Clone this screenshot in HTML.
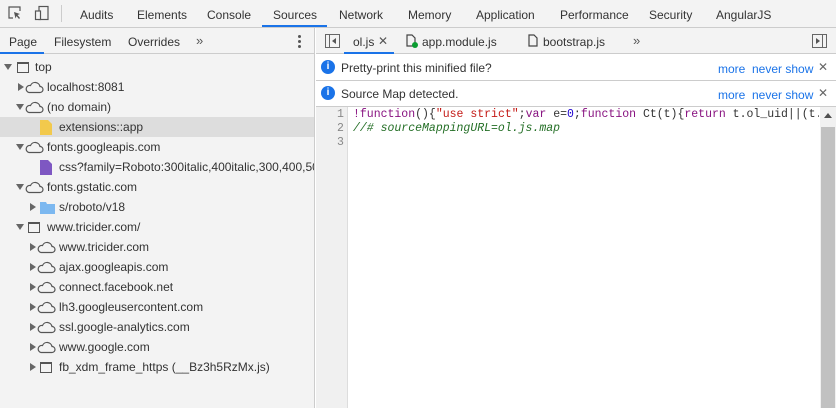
<!DOCTYPE html>
<html><head><style>
*{margin:0;padding:0;box-sizing:border-box}
body{width:836px;height:408px;overflow:hidden;font-family:"Liberation Sans",sans-serif;font-size:12px;color:#333;background:#fff;position:relative}
.abs{position:absolute;white-space:nowrap}
#top{position:absolute;left:0;top:0;width:836px;height:28px;background:#f3f3f3;border-bottom:1px solid #ccc}
#top span{position:absolute;top:8px;color:#333}
#left{position:absolute;left:0;top:28px;width:315px;height:380px;background:#f3f3f3;border-right:1px solid #ccc}
#tree{overflow:hidden;width:314px;height:351px}
.row{position:absolute;left:0;width:314px;height:20px;line-height:20px;white-space:nowrap;overflow:hidden}
.row .t{position:absolute;top:0;white-space:nowrap}
.arrow{position:absolute;top:7px;width:0;height:0}
.ad{border-left:4px solid transparent;border-right:4px solid transparent;border-top:6px solid #666}
.ar{border-top:4px solid transparent;border-bottom:4px solid transparent;border-left:6px solid #666;top:6px}
.cloud{position:absolute;top:3px}
.code{font-family:"Liberation Mono",monospace;font-size:11.5px}
</style></head><body>
<div id="top">
<svg class="abs" style="left:8px;top:6px" width="14" height="14" viewBox="0 0 14 14"><path d="M5 12H1V1h11v4" fill="none" stroke="#555" stroke-width="1.2"/><path d="M6 6l6 2-2.5 1 2.5 3-1 1-2.5-3-1 2.5z" fill="#555"/></svg>
<svg class="abs" style="left:34px;top:5px" width="16" height="16" viewBox="0 0 16 16"><rect x="5" y="1.5" width="9" height="13" fill="none" stroke="#555" stroke-width="1.2"/><rect x="1.5" y="6" width="5" height="8.5" fill="#f3f3f3" stroke="#555" stroke-width="1.2"/></svg>
<div class="abs" style="left:61px;top:5px;width:1px;height:17px;background:#ccc"></div>
<span style="left:80px">Audits</span><span style="left:137px">Elements</span><span style="left:207px">Console</span><span style="left:273px">Sources</span><span style="left:339px">Network</span><span style="left:408px">Memory</span><span style="left:476px">Application</span><span style="left:560px">Performance</span><span style="left:649px">Security</span><span style="left:716px">AngularJS</span>
<div class="abs" style="left:262px;top:25px;width:65px;height:2px;background:#1a73e8"></div>
</div>
<div id="left">
<div class="abs" style="left:0;top:0;width:315px;height:26px;border-bottom:1px solid #ccc"></div>
<span class="abs" style="left:9px;top:7px">Page</span><span class="abs" style="left:54px;top:7px">Filesystem</span><span class="abs" style="left:128px;top:7px">Overrides</span><span class="abs" style="left:196px;top:5px;font-size:13px;color:#555">»</span>
<div class="abs" style="left:0;top:24px;width:44px;height:2px;background:#1a73e8"></div>
<div class="abs" style="left:298px;top:7px;width:3px;height:3px;background:#555;border-radius:2px;box-shadow:0 5px #555,0 10px #555"></div>
</div>
<div id="tree" style="position:absolute;left:0;top:57px">
<div class="row" style="top:0"><div class="arrow ad" style="left:4px"></div><div class="abs" style="left:17px;top:5px;width:12px;height:11px;border:1.3px solid #555;border-top-width:2.5px"></div><span class="t" style="left:35px">top</span></div>
<div class="row" style="top:20px"><div class="arrow ar" style="left:18px"></div><svg class="cloud" style="left:25px" width="19" height="14" viewBox="0 0 19 14"><path d="M4 12.5h11a3 3 0 0 0 0-6 5 5 0 0 0-9.5-1A3.5 3.5 0 0 0 4 12.5z" fill="none" stroke="#555" stroke-width="1.2"/></svg><span class="t" style="left:47px">localhost:8081</span></div>
<div class="row" style="top:40px"><div class="arrow ad" style="left:16px"></div><svg class="cloud" style="left:25px" width="19" height="14" viewBox="0 0 19 14"><path d="M4 12.5h11a3 3 0 0 0 0-6 5 5 0 0 0-9.5-1A3.5 3.5 0 0 0 4 12.5z" fill="none" stroke="#555" stroke-width="1.2"/></svg><span class="t" style="left:47px">(no domain)</span></div>
<div class="row" style="top:60px;background:#ddd"><svg class="abs" style="left:40px;top:3px" width="12" height="15"><path d="M0 0h8l4 4v11H0z" fill="#f2c94c"/></svg><span class="t" style="left:59px">extensions::app</span></div>
<div class="row" style="top:80px"><div class="arrow ad" style="left:16px"></div><svg class="cloud" style="left:25px" width="19" height="14" viewBox="0 0 19 14"><path d="M4 12.5h11a3 3 0 0 0 0-6 5 5 0 0 0-9.5-1A3.5 3.5 0 0 0 4 12.5z" fill="none" stroke="#555" stroke-width="1.2"/></svg><span class="t" style="left:47px">fonts.googleapis.com</span></div>
<div class="row" style="top:100px"><svg class="abs" style="left:40px;top:3px" width="12" height="15"><path d="M0 0h8l4 4v11H0z" fill="#7e57c2"/></svg><span class="t" style="left:59px">css?family=Roboto:300italic,400italic,300,400,500</span></div>
<div class="row" style="top:120px"><div class="arrow ad" style="left:16px"></div><svg class="cloud" style="left:25px" width="19" height="14" viewBox="0 0 19 14"><path d="M4 12.5h11a3 3 0 0 0 0-6 5 5 0 0 0-9.5-1A3.5 3.5 0 0 0 4 12.5z" fill="none" stroke="#555" stroke-width="1.2"/></svg><span class="t" style="left:47px">fonts.gstatic.com</span></div>
<div class="row" style="top:140px"><div class="arrow ar" style="left:30px"></div><svg class="abs" style="left:40px;top:4px" width="15" height="13"><path d="M0 1h6l1 2h8v10H0z" fill="#7cb8f0"/></svg><span class="t" style="left:59px">s/roboto/v18</span></div>
<div class="row" style="top:160px"><div class="arrow ad" style="left:16px"></div><div class="abs" style="left:28px;top:5px;width:12px;height:11px;border:1.3px solid #555;border-top-width:2.5px"></div><span class="t" style="left:47px">www.tricider.com/</span></div>
<div class="row" style="top:180px"><div class="arrow ar" style="left:30px"></div><svg class="cloud" style="left:37px" width="19" height="14" viewBox="0 0 19 14"><path d="M4 12.5h11a3 3 0 0 0 0-6 5 5 0 0 0-9.5-1A3.5 3.5 0 0 0 4 12.5z" fill="none" stroke="#555" stroke-width="1.2"/></svg><span class="t" style="left:59px">www.tricider.com</span></div>
<div class="row" style="top:200px"><div class="arrow ar" style="left:30px"></div><svg class="cloud" style="left:37px" width="19" height="14" viewBox="0 0 19 14"><path d="M4 12.5h11a3 3 0 0 0 0-6 5 5 0 0 0-9.5-1A3.5 3.5 0 0 0 4 12.5z" fill="none" stroke="#555" stroke-width="1.2"/></svg><span class="t" style="left:59px">ajax.googleapis.com</span></div>
<div class="row" style="top:220px"><div class="arrow ar" style="left:30px"></div><svg class="cloud" style="left:37px" width="19" height="14" viewBox="0 0 19 14"><path d="M4 12.5h11a3 3 0 0 0 0-6 5 5 0 0 0-9.5-1A3.5 3.5 0 0 0 4 12.5z" fill="none" stroke="#555" stroke-width="1.2"/></svg><span class="t" style="left:59px">connect.facebook.net</span></div>
<div class="row" style="top:240px"><div class="arrow ar" style="left:30px"></div><svg class="cloud" style="left:37px" width="19" height="14" viewBox="0 0 19 14"><path d="M4 12.5h11a3 3 0 0 0 0-6 5 5 0 0 0-9.5-1A3.5 3.5 0 0 0 4 12.5z" fill="none" stroke="#555" stroke-width="1.2"/></svg><span class="t" style="left:59px">lh3.googleusercontent.com</span></div>
<div class="row" style="top:260px"><div class="arrow ar" style="left:30px"></div><svg class="cloud" style="left:37px" width="19" height="14" viewBox="0 0 19 14"><path d="M4 12.5h11a3 3 0 0 0 0-6 5 5 0 0 0-9.5-1A3.5 3.5 0 0 0 4 12.5z" fill="none" stroke="#555" stroke-width="1.2"/></svg><span class="t" style="left:59px">ssl.google-analytics.com</span></div>
<div class="row" style="top:280px"><div class="arrow ar" style="left:30px"></div><svg class="cloud" style="left:37px" width="19" height="14" viewBox="0 0 19 14"><path d="M4 12.5h11a3 3 0 0 0 0-6 5 5 0 0 0-9.5-1A3.5 3.5 0 0 0 4 12.5z" fill="none" stroke="#555" stroke-width="1.2"/></svg><span class="t" style="left:59px">www.google.com</span></div>
<div class="row" style="top:300px"><div class="arrow ar" style="left:30px"></div><div class="abs" style="left:40px;top:5px;width:12px;height:11px;border:1.3px solid #555;border-top-width:2.5px"></div><span class="t" style="left:59px">fb_xdm_frame_https (__Bz3h5RzMx.js)</span></div>
</div>
<!-- right -->
<div class="abs" style="left:316px;top:28px;width:520px;height:26px;background:#f3f3f3;border-bottom:1px solid #ccc"></div>
<svg class="abs" style="left:325px;top:34px" width="15" height="14"><rect x="0.5" y="0.5" width="14" height="13" fill="none" stroke="#666"/><line x1="4.5" y1="1" x2="4.5" y2="13" stroke="#666"/><path d="M11 4v6l-4-3z" fill="#555"/></svg>
<span class="abs" style="left:353px;top:35px">ol.js</span><span class="abs" style="left:378px;top:34px;color:#555">✕</span>
<div class="abs" style="left:344px;top:52px;width:50px;height:2px;background:#1a73e8"></div>
<svg class="abs" style="left:406px;top:34px" width="12" height="14"><path d="M1 1h5l3 3v8H1z" fill="none" stroke="#444" stroke-width="1.2"/><circle cx="9" cy="11" r="3" fill="#0a9d31"/></svg>
<span class="abs" style="left:422px;top:35px;color:#333">app.module.js</span>
<svg class="abs" style="left:528px;top:34px" width="10" height="14"><path d="M1 1h5l3 3v8H1z" fill="none" stroke="#444" stroke-width="1.2"/></svg>
<span class="abs" style="left:543px;top:35px;color:#333">bootstrap.js</span>
<span class="abs" style="left:633px;top:33px;font-size:13px;color:#555">»</span>
<svg class="abs" style="left:812px;top:34px" width="15" height="14"><rect x="0.5" y="0.5" width="14" height="13" fill="none" stroke="#666"/><line x1="10.5" y1="1" x2="10.5" y2="13" stroke="#666"/><path d="M4 4v6l4-3z" fill="#555"/></svg>
<!-- infobars -->
<div class="abs" style="left:316px;top:55px;width:520px;height:26px;border-bottom:1px solid #ccc;background:#fff"></div>
<div class="abs" style="left:316px;top:81px;width:520px;height:26px;border-bottom:1px solid #ccc;background:#fff"></div>
<div class="abs" style="left:321px;top:60px;width:14px;height:14px;border-radius:7px;background:#1a73e8;color:#fff;font-size:10px;font-weight:bold;text-align:center;line-height:14px">i</div>
<div class="abs" style="left:321px;top:86px;width:14px;height:14px;border-radius:7px;background:#1a73e8;color:#fff;font-size:10px;font-weight:bold;text-align:center;line-height:14px">i</div>
<span class="abs" style="left:341px;top:61px">Pretty-print this minified file?</span>
<span class="abs" style="left:341px;top:87px">Source Map detected.</span>
<span class="abs" style="left:718px;top:62px;color:#1a73e8">more</span><span class="abs" style="left:752px;top:62px;color:#1a73e8">never show</span><span class="abs" style="left:818px;top:60px;color:#666">✕</span>
<span class="abs" style="left:718px;top:88px;color:#1a73e8">more</span><span class="abs" style="left:752px;top:88px;color:#1a73e8">never show</span><span class="abs" style="left:818px;top:86px;color:#666">✕</span>
<!-- code -->
<div class="abs" style="left:316px;top:107px;width:32px;height:301px;background:#f0f0f0;border-right:1px solid #ddd"></div>
<div class="abs code" style="left:337px;top:108px;line-height:14px;color:#888">1<br>2<br>3</div>
<div class="abs code" style="left:353px;top:108px;line-height:14px;width:466px;overflow:hidden"><span style="color:#881280">!function</span>(){<span style="color:#c41a16">"use strict"</span>;<span style="color:#881280">var</span> e=<span style="color:#1c00cf">0</span>;<span style="color:#881280">function</span> Ct(t){<span style="color:#881280">return</span> t.ol_uid||(t.ol_uid<br><span style="color:#236e25;font-style:italic">//# sourceMappingURL=ol.js.map</span></div>
<div class="abs" style="left:820px;top:107px;width:16px;height:301px;background:#f1f1f1"></div>
<div class="abs" style="left:821px;top:127px;width:14px;height:281px;background:#c1c1c1"></div>
<div class="abs" style="left:824px;top:113px;border-left:4px solid transparent;border-right:4px solid transparent;border-bottom:5px solid #505050"></div>
</body></html>
